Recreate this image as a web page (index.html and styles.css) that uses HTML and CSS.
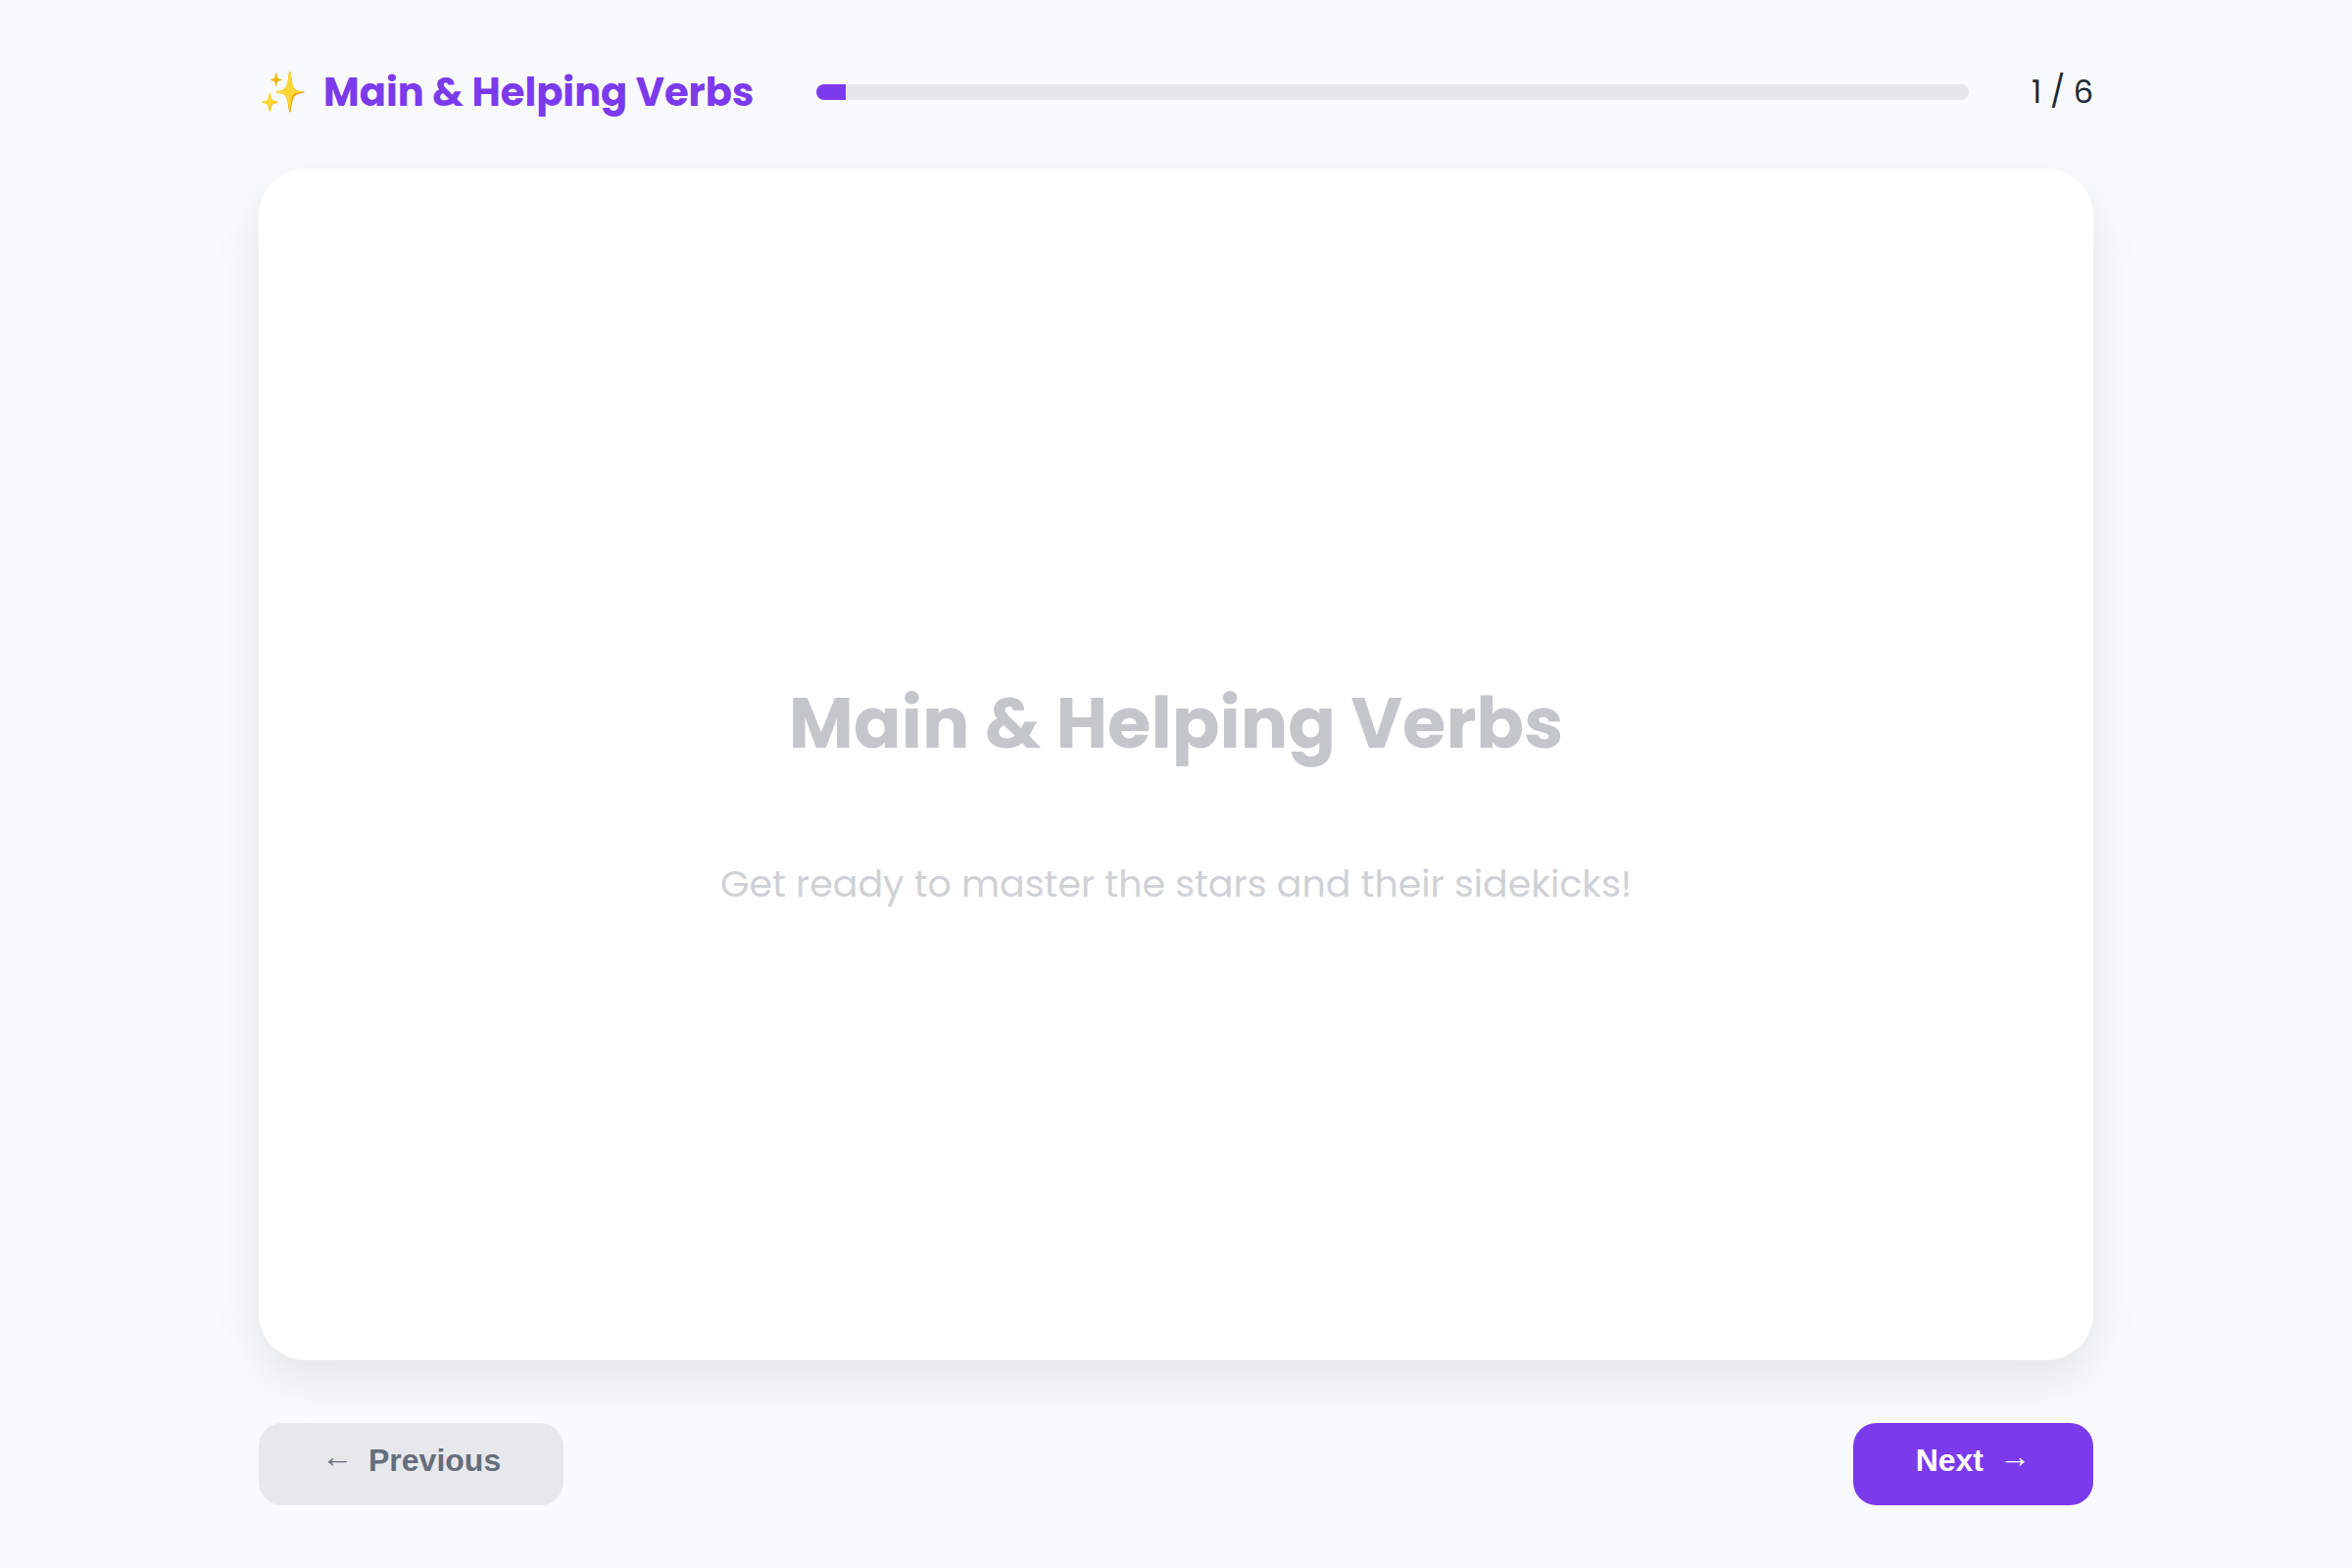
FILE: index.html
```html
<!DOCTYPE html>
<html lang="en">
<head>
    <meta charset="UTF-8">
    <meta name="viewport" content="width=device-width, initial-scale=1.0">
    <title>Main &amp; Helping Verbs</title>
    <link rel="stylesheet" href="styles.css">
</head>
<body>
    <div class="app">
        <header class="header">
            <div class="brand">
                <svg class="brand-icon" viewBox="0 0 50 46" aria-hidden="true">
                    <defs>
                        <linearGradient id="gold" x1="0" y1="0" x2="1" y2="1">
                            <stop offset="0.55" stop-color="#fdd835"/>
                            <stop offset="0.8" stop-color="#f4b400"/>
                        </linearGradient>
                    </defs>
                    <g transform="matrix(1.065 0 0 1 1.8 0)">
                        <path fill="#f49b00" d="M28 2C28.600 2 28.800 2.500 29 4C30 13 31 18 33 20C35 21.500 38 22 41.500 22.500C42.500 22.700 42.500 23.300 41.500 23.500C37 24.500 34 25.500 32.500 27.500C30.500 30 30 36 29 42.500C28.800 44 27.600 44 27.400 42.500C26 33 25.500 28.500 23 26C21.500 24.500 18.500 24 15.500 23.500C14.300 23.300 14.300 22.600 15.500 22.400C19 21.700 22 21 23.500 19C26 16 26.500 10 27.200 4C27.400 2.500 27.500 2 28 2Z"/>
                        <path fill="#fdd835" d="M28 2C28.600 2 28.800 2.500 29 4C30 13 31 18 33 20C35 21.500 38 22 41.500 22.500C38 23.500 33.500 23.500 31.500 26C29 29 29.500 36 28 42.500C26.500 33 25.500 28.500 23 26C21.500 24.500 18.500 24 15.500 23.500C14.300 23.300 14.300 22.600 15.500 22.400C19 21.700 22 21 23.500 19C26 16 26.500 10 27.200 4C27.400 2.500 27.500 2 28 2Z"/>
                        <path fill="url(#gold)" d="M9 23C9.800 23 10 28 11.500 30.500C12.500 32 17 32.500 17 33.200C17 34 12.500 34.500 11.500 36C10 38.500 9.800 43 9 43C8.200 43 8 38.500 6.500 36C5.500 34.500 1 34 1 33.200C1 32.500 5.500 32 6.500 30.500C8 28 8.200 23 9 23Z"/>
                        <path fill="#f4b400" d="M15 3C15.600 3 15.800 7 16.500 8.500C17.200 9.500 20.500 9.800 20.500 10.400C20.500 11 17.500 11.200 16.500 12.300C15.800 13.500 15.600 17 15 17C14.400 17 14.200 13.500 13.500 12.300C12.500 11.200 10 11 10 10.400C10 9.800 12.800 9.500 13.500 8.500C14.200 7 14.400 3 15 3Z"/>
                    </g>
                </svg>
                <span class="brand-title">Main &amp; Helping Verbs</span>
            </div>
            <div class="progress" role="progressbar" aria-label="Slide progress" aria-valuemin="0" aria-valuemax="6" aria-valuenow="1">
                <div class="progress-fill"></div>
            </div>
            <div class="counter">1 / 6</div>
        </header>

        <main class="slide">
            <h1>Main &amp; Helping Verbs</h1>
            <p>Get ready to master the stars and their sidekicks!</p>
        </main>

        <nav class="controls">
            <button type="button" class="btn btn-prev"><span class="arrow">←</span>Previous</button>
            <button type="button" class="btn btn-next">Next<span class="arrow">→</span></button>
        </nav>
    </div>
</body>
</html>
```
FILE: styles.css
```css
*,
*::before,
*::after {
    box-sizing: border-box;
}

:root {
    --clr-primary: #7c3aed;
    --clr-bg: #f9fafc;
    --clr-text: #1f2937;
    --clr-track: #e5e7eb;

    --ff-body: "Poppins", "Inter", sans-serif;
    --ff-button: "Liberation Sans", Arial, sans-serif;
}

body {
    margin: 0;
    background: var(--clr-bg);
    color: var(--clr-text);
    font-family: var(--ff-body);
}

.app {
    display: flex;
    flex-direction: column;
    max-width: 2000px;
    min-height: 100vh;
    margin: 0 auto;
    padding: 64px;
}

.header {
    display: flex;
    align-items: center;
    gap: 64px;
    margin-bottom: 48px;
}

.brand {
    display: flex;
    align-items: center;
    gap: 16px;
    color: var(--clr-primary);
    font-size: 40px;
    font-weight: 700;
    line-height: 60px;
    white-space: nowrap;
}

.brand-icon {
    width: 50px;
    height: 46px;
}

.progress {
    flex: 1;
    height: 16px;
    background: var(--clr-track);
    border-radius: 8px;
    overflow: hidden;
}

.progress-fill {
    width: 30px;
    height: 100%;
    background: var(--clr-primary);
}

.counter {
    font-size: 32px;
    white-space: nowrap;
}

.slide {
    flex: 1;
    display: flex;
    flex-direction: column;
    align-items: center;
    justify-content: center;
    padding: 120px 64px 64px;
    background: #ffffff;
    border-radius: 48px;
    box-shadow: 0 20px 50px rgba(0, 0, 0, 0.09);
    text-align: center;
}

.slide h1 {
    margin: 0 0 80px;
    color: #c5c6ca;
    font-size: 72px;
    font-weight: 700;
    line-height: 108px;
}

.slide p {
    margin: 0;
    color: #cfd1d5;
    font-size: 38px;
    line-height: 60px;
}

.controls {
    display: flex;
    justify-content: space-between;
    margin-top: 64px;
}

.btn {
    display: flex;
    align-items: flex-start;
    gap: 16px;
    padding: 20px 64px 28px;
    border: none;
    border-radius: 24px;
    font-family: var(--ff-button);
    font-size: 32px;
    font-weight: 700;
    line-height: 36px;
    cursor: pointer;
}

.arrow {
    line-height: 28px;
}

.btn-prev {
    background: #e7e8ec;
    color: #656e7a;
}

.btn-next {
    background: var(--clr-primary);
    color: #ffffff;
}
```
